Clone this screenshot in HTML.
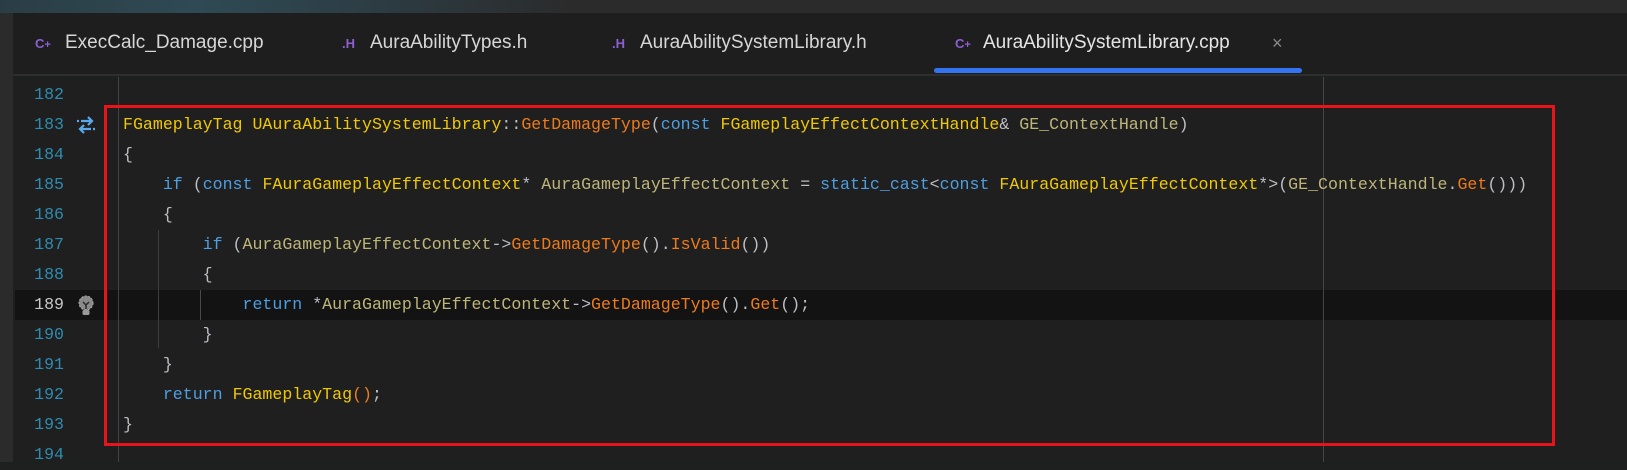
<!DOCTYPE html>
<html><head><meta charset="utf-8"><style>
*{margin:0;padding:0;box-sizing:border-box}
body{width:1627px;height:462px;background:#1e1f1f;overflow:hidden;position:relative;font-family:"Liberation Mono",monospace}
.top{position:absolute;left:0;top:0;width:1627px;height:13px;background:linear-gradient(90deg,#2b3d44 0%,#2f4a55 12%,#2c3a40 25%,#2b2b2b 35%,#2b2b2b 100%)}
.strip{position:absolute;left:0;top:13px;width:13px;height:449px;background:#2b2b2b}
.tabs{position:absolute;left:13px;top:13px;right:0;height:63px;background:#1e1e1e;border-bottom:2px solid #2e2e2e}
.tab{position:absolute;top:33px;font-family:"Liberation Sans",sans-serif;font-size:19px;color:#d6d6d6;line-height:20px;white-space:nowrap}
.ic{position:absolute;top:36px;font-family:"Liberation Sans",sans-serif;font-size:13px;color:#8d5fd3;font-weight:bold}
.ul{position:absolute;left:934px;top:68px;width:368px;height:5px;background:#3574f0;border-radius:3px}
.ed{position:absolute;left:13px;top:77px;right:0;bottom:0;background:#1f1f1f}
.cur{position:absolute;left:15px;top:290px;right:0;height:30px;background:#131313}
.ln{position:absolute;left:20px;width:44px;text-align:right;font-size:16.6px;color:#2e8cb0;line-height:30px}
.code{position:absolute;left:123px;font-size:16.6px;line-height:30px;white-space:pre;color:#bcbec4}
.vl{position:absolute;width:1px;background:#3d3d3d}
.y{color:#f0c800}.o{color:#ee7b1a}.k{color:#4f9ee0}.p{color:#bdb57a}.d{color:#bcbec4}
.red{position:absolute;left:104px;top:105px;width:1451px;height:341px;border:3px solid #e8141c}
</style></head><body>
<div class="top"></div>
<div class="strip"></div>
<div class="tabs"></div>
<div class="ic" style="left:35px">C<span style="font-size:11px">+</span></div><div class="tab" style="left:65px">ExecCalc_Damage.cpp</div>
<div class="ic" style="left:342px">.H</div><div class="tab" style="left:370px">AuraAbilityTypes.h</div>
<div class="ic" style="left:612px">.H</div><div class="tab" style="left:640px">AuraAbilitySystemLibrary.h</div>
<div class="ic" style="left:955px">C<span style="font-size:11px">+</span></div><div class="tab" style="left:983px;color:#e4e4e4">AuraAbilitySystemLibrary.cpp</div>
<div class="tab" style="left:1272px;color:#8a8a8a;font-size:18px">×</div>
<div class="ul"></div>
<div class="ed"></div>
<div class="cur"></div>
<div class="vl" style="left:118px;top:77px;height:385px;background:#424242"></div>
<div class="vl" style="left:1323px;top:77px;height:385px;background:#454545"></div>
<div class="vl" style="left:158px;top:230px;height:118px"></div>
<div class="vl" style="left:200px;top:290px;height:30px;background:#4a4a4a"></div>
<div class="ln" style="top:80px">182</div>
<div class="ln" style="top:110px">183</div>
<div class="ln" style="top:140px">184</div>
<div class="ln" style="top:170px">185</div>
<div class="ln" style="top:200px">186</div>
<div class="ln" style="top:230px">187</div>
<div class="ln" style="top:260px">188</div>
<div class="ln" style="top:290px;color:#c8c8c8">189</div>
<div class="ln" style="top:320px">190</div>
<div class="ln" style="top:350px">191</div>
<div class="ln" style="top:380px">192</div>
<div class="ln" style="top:410px">193</div>
<div class="ln" style="top:440px">194</div>
<svg style="position:absolute;left:76px;top:115px" width="20" height="20" viewBox="0 0 20 20" fill="none" stroke="#5aa9ee" stroke-width="2.2"><path d="M1 6h2M5 6h11M12 2l4 4-4 4"/><path d="M19 14h-2M15 14H4M8 10l-4 4 4 4"/></svg>
<svg style="position:absolute;left:77px;top:295px" width="18" height="22" viewBox="0 0 18 22"><circle cx="9" cy="8" r="7" fill="#8a8a8a" stroke="#aaa" stroke-dasharray="2 1.5"/><path d="M6 7l3 3 3-3M9 10v4" stroke="#2a2a2a" stroke-width="1.5" fill="none"/><rect x="5.5" y="15" width="7" height="5" rx="1.5" fill="#9a9a9a"/></svg>
<div class="code" style="top:110px"><span class="y">FGameplayTag UAuraAbilitySystemLibrary</span>::<span class="o">GetDamageType</span>(<span class="k">const</span> <span class="y">FGameplayEffectContextHandle</span>&amp; <span class="p">GE_ContextHandle</span>)</div>
<div class="code" style="top:140px">{</div>
<div class="code" style="top:170px">    <span class="k">if</span> (<span class="k">const</span> <span class="y">FAuraGameplayEffectContext</span>* <span class="p">AuraGameplayEffectContext</span> = <span class="k">static_cast</span>&lt;<span class="k">const</span> <span class="y">FAuraGameplayEffectContext</span>*&gt;(<span class="p">GE_ContextHandle</span>.<span class="o">Get</span>()))</div>
<div class="code" style="top:200px">    {</div>
<div class="code" style="top:230px">        <span class="k">if</span> (<span class="p">AuraGameplayEffectContext</span>-&gt;<span class="o">GetDamageType</span>().<span class="o">IsValid</span>())</div>
<div class="code" style="top:260px">        {</div>
<div class="code" style="top:290px">            <span class="k">return</span> *<span class="p">AuraGameplayEffectContext</span>-&gt;<span class="o">GetDamageType</span>().<span class="o">Get</span>();</div>
<div class="code" style="top:320px">        }</div>
<div class="code" style="top:350px">    }</div>
<div class="code" style="top:380px">    <span class="k">return</span> <span class="y">FGameplayTag</span><span class="o">()</span>;</div>
<div class="code" style="top:410px">}</div>
<div class="red"></div>
</body></html>
